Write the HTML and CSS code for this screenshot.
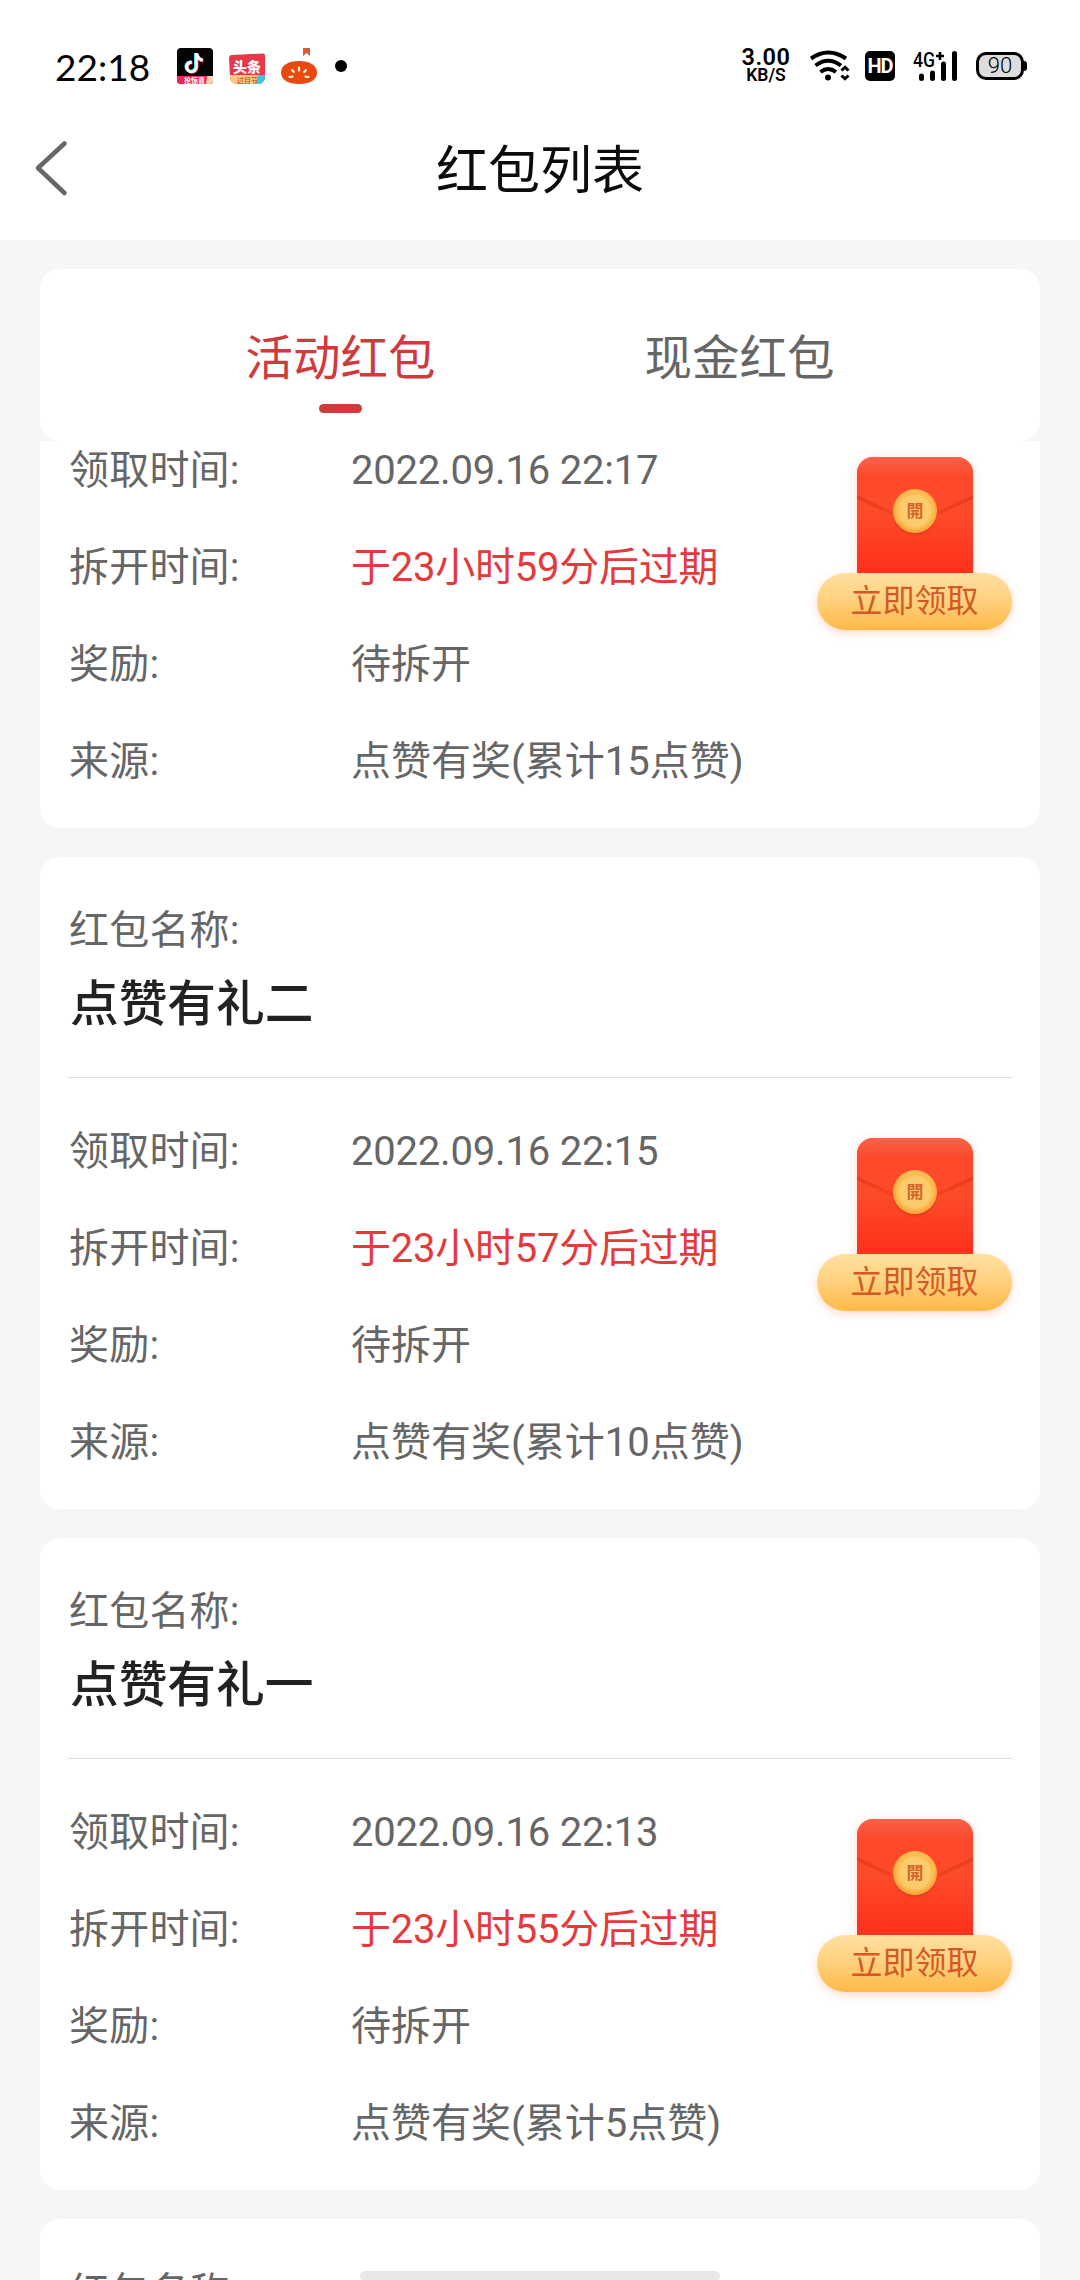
FILE: index.html
```html
<!DOCTYPE html>
<html lang="zh-CN">
<head>
<meta charset="utf-8">
<title>红包列表</title>
<link rel="stylesheet" href="styles.css">
</head>
<body>
<svg width="0" height="0" class="defs" aria-hidden="true">
  <defs>
    <linearGradient id="env" x1="0" y1="0" x2="0" y2="1">
      <stop offset="0" stop-color="#fe4a2a"/><stop offset=".5" stop-color="#fd4a29"/><stop offset="1" stop-color="#fe301b"/>
    </linearGradient>
    <linearGradient id="flap" x1="0" y1="0" x2="0" y2="1">
      <stop offset="0" stop-color="#fd614a"/><stop offset=".28" stop-color="#fa4d30"/><stop offset=".32" stop-color="#fe482a"/><stop offset="1" stop-color="#fe4a2a"/>
    </linearGradient>
    <linearGradient id="crease" x1="0" y1="0" x2="0" y2="1">
      <stop offset="0" stop-color="#dd3418" stop-opacity=".75"/><stop offset="1" stop-color="#ee3f20" stop-opacity=".5"/>
    </linearGradient>
    <symbol id="envelope" viewBox="0 0 136 126">
      <path d="M10 26a16 16 0 0 1 16-16h84a16 16 0 0 1 16 16v100H10z" fill="url(#env)"/>
      <path d="M10 46L46 63Q68 74 90 63L126 46V52L90 69Q68 79 46 69L10 52z" fill="url(#crease)"/>
      <path d="M10 26a16 16 0 0 1 16-16h84a16 16 0 0 1 16 16v22L90 65Q68 75 46 65L10 48z" fill="url(#flap)"/>
      <circle cx="68" cy="67" r="22" fill="#d9371a" opacity=".4"/>
      <circle cx="68" cy="64" r="22" fill="#fbab3d"/>
      <circle cx="68" cy="62.500" r="20" fill="#fdbb52"/>
      <circle cx="68" cy="64" r="16.500" fill="#fccb6b"/>
    </symbol>
  </defs>
</svg>
<div class="phone">
  <div class="statusbar">
    <span class="clock">22:18</span>
    <svg class="app" viewBox="0 0 36 36"><rect width="36" height="36" rx="4" fill="#050505"/><path d="M0 28h36v4a4 4 0 0 1-4 4H4a4 4 0 0 1-4-4z" fill="#ee2854"/><path d="M30 28h6v4a4 4 0 0 1-4 4h-3z" fill="#ffd2b0"/><g fill="none" stroke-width="3"><path d="M18.500 5v13.500a4.800 4.800 0 1 1-4.500-4.800M19 6q1.500 5.500 6 6" stroke="#25e8e4"/><path d="M20 6v13.500a4.800 4.800 0 1 1-4.500-4.800M20.500 7q1.500 5.500 6 6" stroke="#fe2c55"/><path d="M19.300 5v14a4.800 4.800 0 1 1-4.500-4.800M19.800 6q1.500 5.500 6 6" stroke="#fff"/></g><text x="7" y="35" class="tiny" fill="#fff">抢惊喜</text></svg>
    <svg class="app" viewBox="0 0 36 36"><path d="M3 7L34 5.500a2 2 0 0 1 2 2V29a7 7 0 0 1-7 7H8a7 7 0 0 1-7-7L0 10q0-3 3-3z" fill="#e9384c"/><path d="M1 27h34v3a7 7 0 0 1-6 6H8a7 7 0 0 1-7-7z" fill="#fcca83"/><path d="M29 27h7v2a7 7 0 0 1-7 7h-3z" fill="#38cbd6"/><text x="4" y="23.500" class="toutiao" fill="#fff">头条</text><text x="8" y="35" class="tiny" fill="#e85b35">过目节</text></svg>
    <svg class="app" viewBox="0 0 36 36"><path d="M22 0h7v8l-3.500-3L22 8z" fill="#d8593c"/><path d="M18 13c11 0 18 4.500 18 11.500S29 36 18 36 0 31.500 0 24.500 7 13 18 13z" fill="#e9490e"/><g stroke="#fff1d8" stroke-width="2.200" stroke-linecap="round"><path d="M18 19.500v3M11 22l1.800 2M25 22l-1.800 2M8.500 29l3-.3M27.500 29l-3-.3"/></g></svg>
    <span class="more"></span>
    <div class="net"><b>3.00</b><span>KB/S</span></div>
    <svg class="wifi" viewBox="0 0 40 32"><g fill="none" stroke="#000" stroke-width="4"><path d="M1 8.500Q18-3.500 36 8.500M5.500 15.500Q18 6 31 15.500M10.500 22Q18 16 26 22"/></g><circle cx="18" cy="27.500" r="3"/><path d="M31.500 20.500l3.500-3.300 3.500 3.300M31.500 25.500l3.500 3.300 3.500-3.300" fill="none" stroke="#000" stroke-width="3"/></svg>
    <span class="hd">HD</span>
    <svg class="signal" viewBox="0 0 46 34"><text x="0" y="17.500" class="g4" textLength="22" lengthAdjust="spacingAndGlyphs">4G</text><path d="M23 7h8M27 3v8" stroke="#000" stroke-width="2.600"/><g stroke="#000" stroke-width="5" stroke-linecap="round"><path d="M8.500 27v2.500M19.500 24v5.500M30.500 15v14.500M41.500 4.500v25"/></g></svg>
    <div class="battery"><span>90</span></div>
  </div>
  <header class="nav">
    <svg class="back" viewBox="0 0 36 60"><path d="M31.500 5.500L5 30l26.500 25" fill="none" stroke="#666" stroke-width="4.500" stroke-linecap="round" stroke-linejoin="round"/></svg>
    <h1>红包列表</h1>
  </header>
  <nav class="tabs">
    <a class="tab active">活动红包</a>
    <a class="tab">现金红包</a>
  </nav>
  <main class="list">
    <section class="card scrolled">
      <div class="body">
        <dl><dt>领取时间:</dt><dd class="date">2022.09.16 22:17</dd><dt>拆开时间:</dt><dd class="due">于23小时59分后过期</dd><dt>奖励:</dt><dd>待拆开</dd><dt>来源:</dt><dd>点赞有奖(累计15点赞)</dd></dl>
        <div class="claim"><svg class="pic" viewBox="0 0 136 126"><use href="#envelope"/><text x="68" y="70" class="kai">開</text></svg><button>立即领取</button></div>
      </div>
    </section>
    <section class="card">
      <div class="head"><p>红包名称:</p><h2>点赞有礼二</h2></div>
      <div class="body">
        <dl><dt>领取时间:</dt><dd class="date">2022.09.16 22:15</dd><dt>拆开时间:</dt><dd class="due">于23小时57分后过期</dd><dt>奖励:</dt><dd>待拆开</dd><dt>来源:</dt><dd>点赞有奖(累计10点赞)</dd></dl>
        <div class="claim"><svg class="pic" viewBox="0 0 136 126"><use href="#envelope"/><text x="68" y="70" class="kai">開</text></svg><button>立即领取</button></div>
      </div>
    </section>
    <section class="card">
      <div class="head"><p>红包名称:</p><h2>点赞有礼一</h2></div>
      <div class="body">
        <dl><dt>领取时间:</dt><dd class="date">2022.09.16 22:13</dd><dt>拆开时间:</dt><dd class="due">于23小时55分后过期</dd><dt>奖励:</dt><dd>待拆开</dd><dt>来源:</dt><dd>点赞有奖(累计5点赞)</dd></dl>
        <div class="claim"><svg class="pic" viewBox="0 0 136 126"><use href="#envelope"/><text x="68" y="70" class="kai">開</text></svg><button>立即领取</button></div>
      </div>
    </section>
    <section class="card">
      <div class="head"><p>红包名称:</p></div>
    </section>
  </main>
  <div class="homebar"></div>
</div>
</body>
</html>
```
FILE: styles.css
```css
* { box-sizing: border-box; margin: 0; padding: 0; }
body { background: #f6f6f6; font-family: Roboto, "Noto Sans CJK SC", sans-serif; color: #666; }
.defs { display: block; position: absolute; }
.phone { position: relative; width: 1080px; height: 2280px; overflow: hidden; display: flex; flex-direction: column; }

.statusbar { flex: none; height: 114px; background: #fff; display: flex; align-items: center; padding: 18px 56px 0 55px; color: #000; }
.clock { font: 37px/40px Lato, sans-serif; width: 122px; padding-top: 2px; }
.app { width: 36px; height: 36px; margin-right: 16px; flex: none; }
.tiny { font: 700 7px "Noto Sans CJK SC", sans-serif; }
.toutiao { font: 900 14px "Noto Sans CJK SC", sans-serif; }
.more { width: 12px; height: 12px; border-radius: 50%; background: #000; margin-left: 2px; }
.net { margin-left: auto; width: 50px; display: flex; flex-direction: column; align-items: center; }
.net b { font-size: 23.500px; line-height: 19px; font-weight: 600; letter-spacing: .5px; }
.net span { font-size: 17.500px; line-height: 17px; font-weight: 600; }
.wifi { width: 40px; height: 32px; margin-left: 19px; }
.hd { width: 30px; height: 30px; border-radius: 5px; background: #000; color: #fff; font: 700 20px/31px Roboto, sans-serif; text-align: center; margin-left: 15px; letter-spacing: -1px; }
.signal { width: 46px; height: 34px; margin-left: 18px; }
.g4 { font: 500 20px Roboto, sans-serif; }
.battery { width: 48px; height: 28px; border: 3px solid #000; border-radius: 10px; background: #ddd; margin-left: 17px; font: 300 22px/22px Roboto, sans-serif; text-align: center; position: relative; }
.battery::after { content: ""; position: absolute; right: -6px; top: 6px; width: 4px; height: 10px; border-radius: 0 3px 3px 0; background: #000; }

.nav { flex: none; height: 126px; background: #fff; display: grid; grid-template-columns: 72px 1fr 72px; align-items: center; padding-bottom: 18px; }
.back { width: 36px; height: 60px; margin: 0 0 0 33px; }
.nav h1 { font-size: 52px; line-height: 72px; padding-top: 8px; font-weight: 400; color: #0c0c0c; text-align: center; }

.tabs { flex: none; height: 172px; margin: 29px 40px 0; background: #fff; border-radius: 20px; display: flex; justify-content: center; }
.tab { width: 399px; padding-top: 55px; font-size: 47.500px; line-height: 70px; display: flex; flex-direction: column; align-items: center; }
.tab.active { color: #d03a3c; }
.tab.active::after { content: ""; width: 43px; height: 9px; border-radius: 5px; background: #d03a3c; margin-top: 10px; }

.list { flex: 1; min-height: 0; overflow: hidden; padding: 0 40px; display: flex; flex-direction: column; gap: 29px; }
.card { flex: none; height: 652px; background: #fff; border-radius: 20px; padding: 0 28px; }
.head { height: 221px; border-bottom: 1px solid #dedede; padding: 45px 1px 0; }
.head p { font-size: 40px; line-height: 58px; letter-spacing: .2px; }
.head h2 { font-size: 48.700px; line-height: 70px; font-weight: 500; color: #222; padding: 10px 0 0 1px; }
.body { display: flex; justify-content: space-between; padding: 25px 0 0 1px; }
.card.scrolled { height: 387px; border-radius: 0 0 20px 20px; }
.card.scrolled .body { margin-top: -20px; padding-top: 1px; }
dl { display: grid; grid-template-columns: 282px auto; grid-auto-rows: 97px; font-size: 40px; line-height: 97px; white-space: nowrap; }
dt { letter-spacing: .2px; }
.date { letter-spacing: -.2px; }
.due { color: #e43a3c; letter-spacing: -.25px; }
.claim { width: 195px; padding-top: 25px; display: flex; flex-direction: column; align-items: center; }
.pic { display: block; width: 136px; height: 126px; filter: drop-shadow(0 2px 4px rgba(240, 90, 50, .25)); }
.kai { font: 700 17px "Noto Sans CJK TC", sans-serif; fill: #d5642c; text-anchor: middle; }
button { width: 195px; height: 57px; border: 0; border-radius: 29px; background: linear-gradient(#ffe0a0, #ffd07c 50%, #ffb847); box-shadow: 0 3px 8px rgba(250, 120, 60, .28); color: #d35a26; font: 32px/57px Roboto, "Noto Sans CJK SC", sans-serif; position: relative; }
.homebar { position: absolute; left: 360px; bottom: 0; width: 360px; height: 9px; border-radius: 5px 5px 3px 3px; background: #e8e8e8; }
```
